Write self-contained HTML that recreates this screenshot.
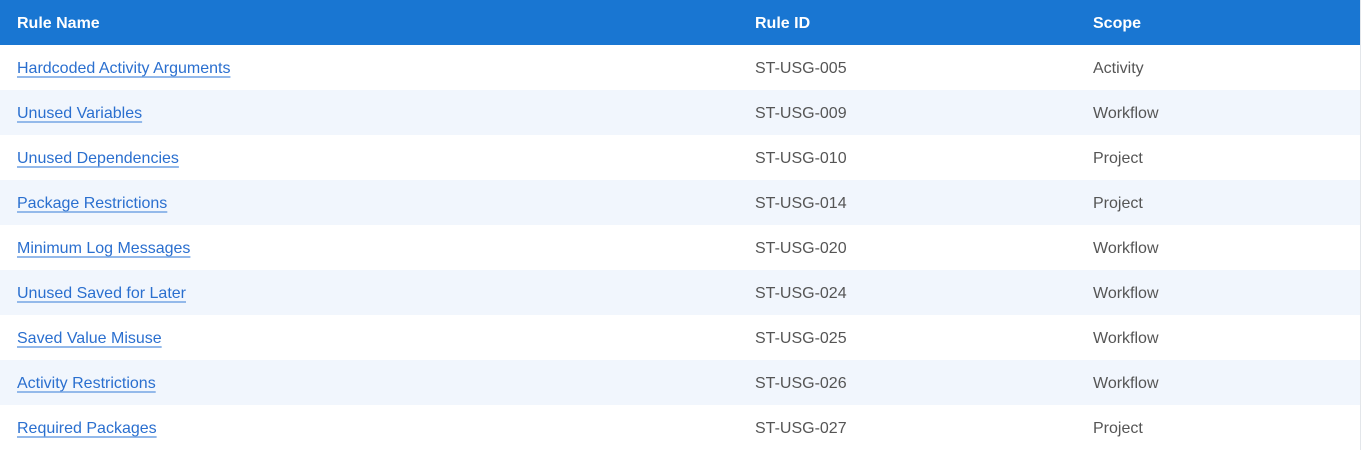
<!DOCTYPE html>
<html><head><style>
html,body{margin:0;padding:0;background:#fff;}
body{width:1362px;height:449px;overflow:hidden;font-family:"Liberation Sans",sans-serif;}
table{border-collapse:collapse;width:1361px;border-right:1px solid #e3e6ea;table-layout:fixed;}
th{background:#1976d2;color:#fff;font-weight:bold;font-size:16px;text-align:left;height:45px;padding:2px 0 0 0;box-sizing:border-box;}
td{height:45px;padding:3px 0 0 0;box-sizing:border-box;font-size:16px;color:#555;}
th:first-child,td:first-child{padding-left:17px;width:755px;}
th:nth-child(2),td:nth-child(2){width:338px;}
tr:nth-child(odd) td{background:#f1f6fd;}
a{color:#2a6fcf;text-decoration:underline;text-decoration-color:#93b9ea;text-decoration-thickness:2px;text-underline-offset:3px;}
</style></head><body>
<table>
<tr><th>Rule Name</th><th>Rule ID</th><th>Scope</th></tr>
<tr><td><a>Hardcoded Activity Arguments</a></td><td>ST-USG-005</td><td>Activity</td></tr>
<tr><td><a>Unused Variables</a></td><td>ST-USG-009</td><td>Workflow</td></tr>
<tr><td><a>Unused Dependencies</a></td><td>ST-USG-010</td><td>Project</td></tr>
<tr><td><a>Package Restrictions</a></td><td>ST-USG-014</td><td>Project</td></tr>
<tr><td><a>Minimum Log Messages</a></td><td>ST-USG-020</td><td>Workflow</td></tr>
<tr><td><a>Unused Saved for Later</a></td><td>ST-USG-024</td><td>Workflow</td></tr>
<tr><td><a>Saved Value Misuse</a></td><td>ST-USG-025</td><td>Workflow</td></tr>
<tr><td><a>Activity Restrictions</a></td><td>ST-USG-026</td><td>Workflow</td></tr>
<tr><td><a>Required Packages</a></td><td>ST-USG-027</td><td>Project</td></tr>
</table>
</body></html>
